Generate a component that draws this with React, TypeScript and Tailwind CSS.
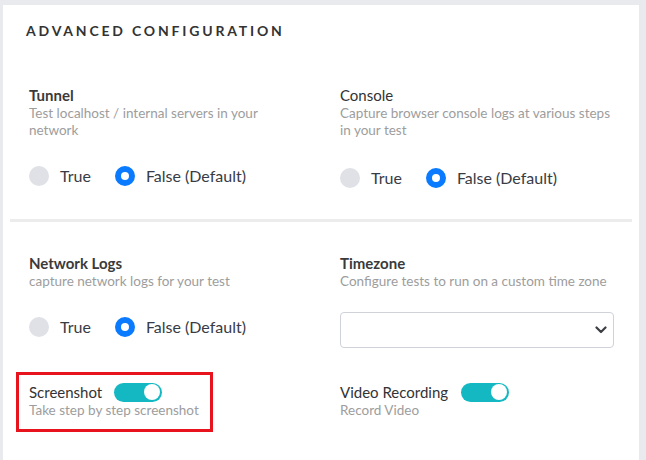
import React from 'react';

type RadioValue = 'true' | 'false';

function Radio({ checked, label }: { checked: boolean; label: string }) {
  return (
    <label className="flex items-center gap-[11px] cursor-pointer">
      {checked ? (
        <span className="w-5 h-5 rounded-full border-[6px] border-[#0a7bff] bg-white" />
      ) : (
        <span className="w-5 h-5 rounded-full bg-[#dfe1e6]" />
      )}
      <span className="text-[16px] leading-5 text-[#383c45]">{label}</span>
    </label>
  );
}

function RadioGroup({ value }: { value: RadioValue }) {
  return (
    <div className="flex items-center gap-[24px]">
      <Radio checked={value === 'true'} label="True" />
      <Radio checked={value === 'false'} label="False (Default)" />
    </div>
  );
}

function Toggle({ on }: { on: boolean }) {
  return (
    <span
      className={
        on
          ? 'flex items-center justify-end w-12 h-[19px] rounded-full bg-[#13b8c3] px-[2px]'
          : 'flex items-center justify-start w-12 h-[19px] rounded-full bg-[#dfe1e6] px-[2px]'
      }
    >
      <span className="w-4 h-4 rounded-full bg-white" />
    </span>
  );
}

function Setting({
  title,
  description,
  bold = true,
}: {
  title: string;
  description: string;
  bold?: boolean;
}) {
  return (
    <div>
      <div
        className={
          bold
            ? 'text-[15px] leading-5 font-bold text-[#3a3a3a]'
            : 'text-[15px] leading-5 font-normal text-[#333]'
        }
      >
        {title}
      </div>
      <p className="text-[13.5px] leading-[17px] text-[#9d9d9d]">{description}</p>
    </div>
  );
}

export default function App() {
  return (
    <div
      className="min-h-[460px] w-[646px] bg-[#e9eaed] pt-[5px] pl-[3px] overflow-hidden"
      style={{ fontFamily: 'Lato, "Open Sans", sans-serif' }}
    >
      <div className="w-[636px] min-h-[455px] bg-white">
        {/* Header */}
        <div className="pl-[23px] pt-[16px]">
          <h2 className="text-[14px] leading-5 font-bold tracking-[0.2em] text-[#333]">
            ADVANCED CONFIGURATION
          </h2>
        </div>

        {/* Section 1 */}
        <div className="grid grid-cols-[274px_274px] gap-x-[37px] px-[26px] pt-[44px] pb-[31px]">
          <div>
            <Setting title="Tunnel" description="Test localhost / internal servers in your network" />
            <div className="mt-[27px]">
              <RadioGroup value="false" />
            </div>
          </div>
          <div>
            <Setting
              title="Console"
              bold={false}
              description="Capture browser console logs at various steps in your test"
            />
            <div className="mt-[29px]">
              <RadioGroup value="false" />
            </div>
          </div>
        </div>

        <div className="mx-[7px] h-[3px] bg-[#ececec]" />

        {/* Section 2 */}
        <div className="grid grid-cols-[274px_274px] gap-x-[37px] gap-y-[34px] px-[26px] pt-[31px] pb-[28px]">
          <div>
            <Setting title="Network Logs" description="capture network logs for your test" />
            <div className="mt-[27px]">
              <RadioGroup value="false" />
            </div>
          </div>
          <div>
            <Setting title="Timezone" description="Configure tests to run on a custom time zone" />
            <div className="mt-[22px] flex items-center justify-end h-9 rounded-[4px] border border-[#cfd2d8] pr-[6px]">
              <svg width="12" height="8" viewBox="0 0 12 8" fill="none">
                <path d="M1.5 1.5 6 6l4.5-4.5" stroke="#3d3f44" strokeWidth="2.2" strokeLinecap="round" strokeLinejoin="round" />
              </svg>
            </div>
          </div>

          <div className="-mt-[10px] -ml-[13px] w-[197px] border-[3px] border-[#e8141d] pl-[10px] pt-[7px] pb-[10px]">
            <div className="flex items-center gap-[12px]">
              <span className="text-[15px] leading-5 text-[#333]">Screenshot</span>
              <Toggle on />
            </div>
            <p className="text-[13.5px] leading-[17px] text-[#9d9d9d]">Take step by step screenshot</p>
          </div>

          <div>
            <div className="flex items-center gap-[13px]">
              <span className="text-[15px] leading-5 text-[#333]">Video Recording</span>
              <Toggle on />
            </div>
            <p className="text-[13.5px] leading-[17px] text-[#9d9d9d]">Record Video</p>
          </div>
        </div>
      </div>
    </div>
  );
}
